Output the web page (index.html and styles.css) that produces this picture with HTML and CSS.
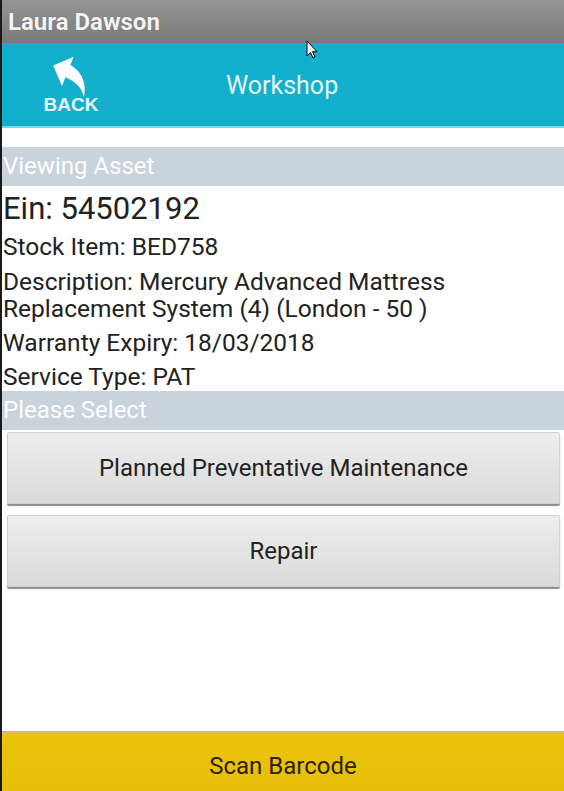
FILE: index.html
```html
<!DOCTYPE html>
<html lang="en">
<head>
	<meta charset="UTF-8">
	<meta name="viewport" content="width=device-width, initial-scale=1.0">
	<title>Workshop</title>
	<link rel="stylesheet" href="styles.css">
</head>
<body>
	<div class="screen">
		<div class="titlebar">Laura Dawson</div>

		<div class="toolbar">
			<div class="back">
				<svg class="back__icon" viewBox="0 0 24 24" width="54" height="54">
					<path d="M10 9V5l-7 7 7 7v-4.1c5 0 8.5 1.6 11 5.1-1-5-4-10-11-11z" fill="#fff"/>
				</svg>
				<span class="back__label">BACK</span>
			</div>
			<div class="toolbar__title">Workshop</div>
		</div>

		<div class="section">Viewing Asset</div>
		<div class="asset">
			<p class="asset__ein">Ein: 54502192</p>
			<p>Stock Item: BED758</p>
			<p class="asset__desc">Description: Mercury Advanced Mattress Replacement System (4) (London - 50 )</p>
			<p>Warranty Expiry: 18/03/2018</p>
			<p>Service Type: PAT</p>
		</div>

		<div class="section">Please Select</div>
		<div class="options">
			<button class="option">Planned Preventative Maintenance</button>
			<button class="option">Repair</button>
		</div>

		<div class="spacer"></div>
		<button class="scan">Scan Barcode</button>

		<svg class="cursor" viewBox="0 0 12 19" width="12" height="19">
			<path d="M1 1v15l3.5-3.5 2.5 5.5 2-1-2.5-5.3H11z" fill="#fff" stroke="#000" stroke-width="1"/>
		</svg>
	</div>
</body>
</html>
```

FILE: styles.css
```css
* {
	box-sizing: border-box;
}
html, body {
	margin: 0;
	padding: 0;
	height: 100%;
}
body {
	font-family: Roboto, "Liberation Sans", sans-serif;
	background: #fff;
	color: #222;
}
.screen {
	position: relative;
	display: flex;
	flex-direction: column;
	height: 791px;
	border-left: 2px solid #1a1a1a;
}
.titlebar {
	height: 43px;
	padding-left: 6px;
	display: flex;
	align-items: center;
	background: linear-gradient(#959595, #7a7a7a);
	color: #f4f4f4;
	font-size: 24px;
	font-weight: bold;
	text-shadow: 0 0 1px rgba(0, 0, 0, 0.4);
}
.toolbar {
	height: 85px;
	display: flex;
	align-items: center;
	background: #12b0cd;
	border-bottom: 2px solid #7fd6e6;
}
.back {
	width: 140px;
	display: flex;
	flex-direction: column;
	align-items: center;
	padding-top: 0;
}
.back__icon {
	transform: rotate(22deg);
	margin-left: 0;
	margin-top: -8px;
}
.back__label {
	color: #e6f7fa;
	font-family: "Liberation Sans", Arial, sans-serif;
	font-weight: bold;
	font-size: 19px;
	margin-top: -6px;
	margin-left: -2px;
}
.toolbar__title {
	margin-left: 84px;
	color: #e2f6fa;
	font-size: 25px;
	padding-top: 2px;
}
.section {
	height: 39px;
	line-height: 38px;
	background: #c9d3dc;
	color: #fdfdfd;
	font-size: 24px;
	padding-left: 1px;
}
.toolbar + .section {
	margin-top: 19px;
}
.asset {
	display: flex;
	flex-direction: column;
	gap: 7px;
	padding: 5px 0 1px 1px;
}
.asset p {
	margin: 0;
	font-size: 24.5px;
	line-height: 27px;
	color: #222;
}
.asset .asset__ein {
	font-size: 31px;
	line-height: 36px;
	margin-bottom: -1px;
}
.asset .asset__desc {
	margin-top: 1px;
}
.options {
	display: flex;
	flex-direction: column;
	gap: 11px;
	padding: 2px 4px 0 5px;
}
.option {
	height: 72px;
	font-family: inherit;
	font-size: 24px;
	color: #222;
	background: linear-gradient(#eeeeee, #e2e2e2 60%, #dadada);
	border: 1px solid #d2d2d2;
	border-radius: 2px;
	box-shadow: 0 2px 1px #8d8d8d;
}
.spacer {
	flex: 1;
}
.scan {
	height: 60px;
	font-family: inherit;
	font-size: 24px;
	color: #2b2300;
	background: linear-gradient(#ebc30b, #e8be0a);
	border: none;
	border-top: 2px solid #d9bd5a;
	padding-top: 8px;
}
.cursor {
	position: absolute;
	left: 304px;
	top: 40px;
}
```
